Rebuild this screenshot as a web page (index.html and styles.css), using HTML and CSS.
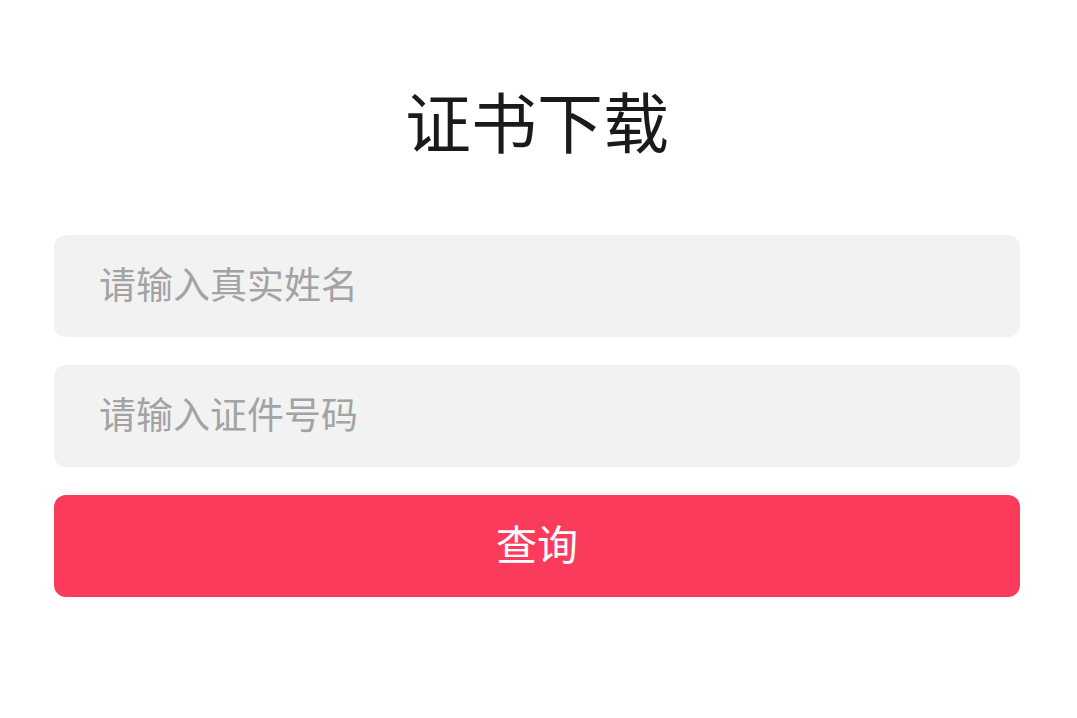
FILE: index.html
```html
<!DOCTYPE html>
<html lang="zh">
<head>
<meta charset="utf-8">
<title>证书下载</title>
<link rel="stylesheet" href="styles.css">
</head>
<body>
<main class="page">
  <h1 class="title">证书下载</h1>
  <form class="form">
    <input class="field" type="text" placeholder="请输入真实姓名">
    <input class="field" type="text" placeholder="请输入证件号码">
    <button class="submit" type="button">查询</button>
  </form>
</main>
</body>
</html>
```

FILE: styles.css
```css
html, body {
  margin: 0;
  padding: 0;
  background: #ffffff;
}
body {
  font-family: "Noto Sans CJK SC", "Noto Sans", sans-serif;
  width: 1077px;
  height: 718px;
  overflow: hidden;
}
.page {
  padding: 86px 57px 0 54px;
  display: flex;
  flex-direction: column;
}
.title {
  margin: 0;
  height: 66px;
  font-size: 66px;
  line-height: 66px;
  font-weight: 400;
  color: #1a1a1a;
  text-align: center;
  padding-left: 0;
}
.form {
  margin-top: 83px;
  display: flex;
  flex-direction: column;
  gap: 28px;
}
.field {
  box-sizing: border-box;
  height: 102px;
  width: 100%;
  border: none;
  outline: none;
  border-radius: 12px;
  background: #f2f2f2;
  padding: 0 0 6px 45px;
  font-family: inherit;
  font-size: 37px;
  color: #333;
}
.field::placeholder {
  color: #a3a3a3;
}
.submit {
  box-sizing: border-box;
  height: 102px;
  width: 100%;
  border: none;
  border-radius: 12px;
  background: #fb3b5b;
  color: #ffffff;
  font-family: inherit;
  font-size: 41px;
  padding: 0 0 8px 0;
}
```
